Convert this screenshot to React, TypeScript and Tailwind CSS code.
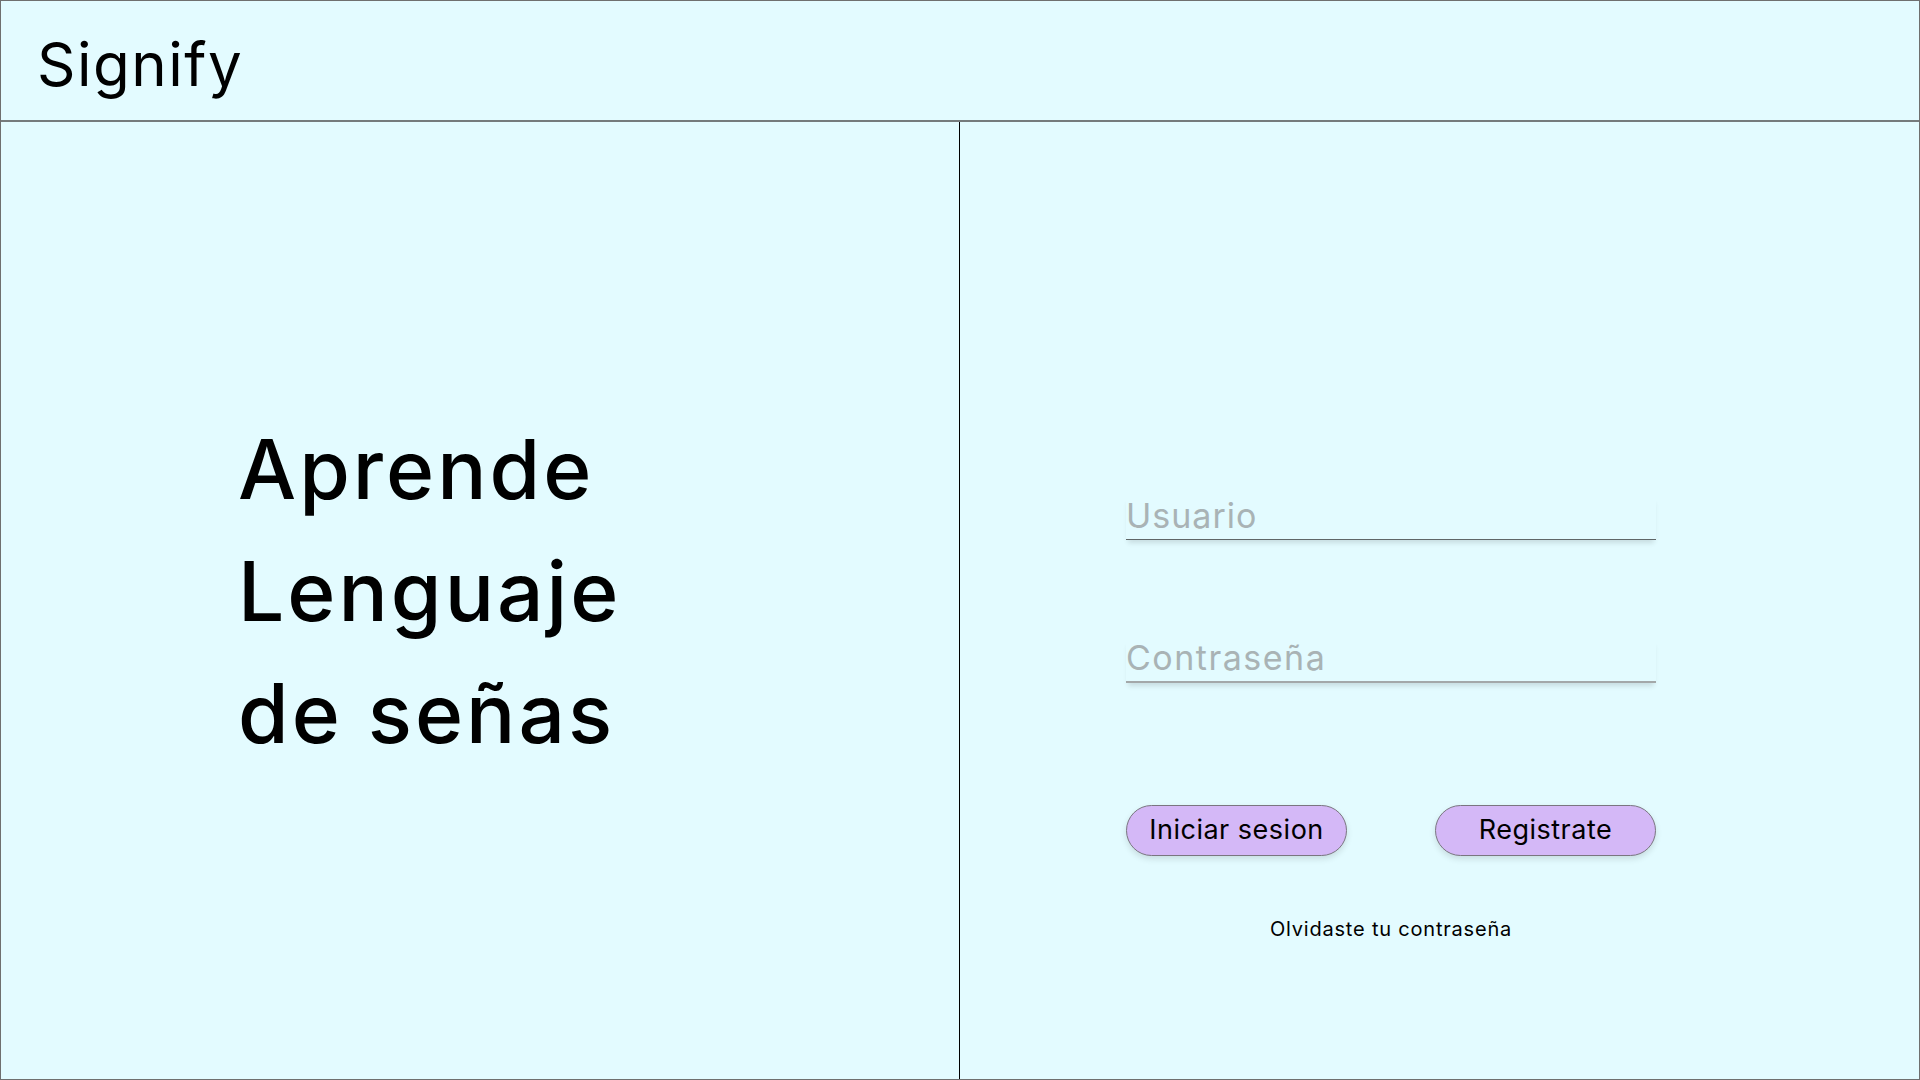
import React from 'react';

const font = { fontFamily: 'Inter, "Noto Sans", sans-serif' };

export default function App() {
  return (
    <div
      className="w-full h-screen flex flex-col bg-[#e3fbff] border border-[#6f6f6f] text-black overflow-hidden"
      style={font}
    >
      {/* Header */}
      <header className="h-[121px] shrink-0 border-b-2 border-[#757b7c] pl-[36px] pt-[33px]">
        <h1 className="text-[60px] leading-none font-normal tracking-[1.5px]">Signify</h1>
      </header>

      <main className="flex-1 grid grid-cols-2">
        {/* Left panel */}
        <section className="border-r border-black pl-[237px] pt-[287px]">
          <h2 className="text-[82px] leading-[122px] font-medium tracking-[3px]">
            Aprende
            <br />
            Lenguaje
            <br />
            de señas
          </h2>
        </section>

        {/* Right panel - login form */}
        <section className="pl-[166px] pt-[374px]">
          <div className="w-[530px] flex flex-col">
            <input
              type="text"
              placeholder="Usuario"
              className="h-[44px] pb-[4px] w-full bg-transparent border-b border-[#5f6667] shadow-[0_5px_5px_-2px_rgba(0,0,0,0.12)] text-[34px] leading-none tracking-[1px] outline-none placeholder:text-[#a9b3b5]"
            />
            <input
              type="password"
              placeholder="Contraseña"
              className="mt-[99px] h-[44px] pb-[5px] w-full bg-transparent border-b-2 border-[#a3a8a9] shadow-[0_5px_5px_-2px_rgba(0,0,0,0.12)] text-[34px] leading-none tracking-[1.5px] outline-none placeholder:text-[#a9b3b5]"
            />

            <div className="mt-[122px] flex justify-between">
              <button className="w-[221px] h-[51px] rounded-full bg-[#d4b8f7] border border-[#7a7580] shadow-[0_3px_6px_rgba(0,0,0,0.12)] text-[27px] tracking-[0.5px] font-normal">
                Iniciar sesion
              </button>
              <button className="w-[221px] h-[51px] rounded-full bg-[#d4b8f7] border border-[#7a7580] shadow-[0_3px_6px_rgba(0,0,0,0.12)] text-[27px] tracking-[0.5px] font-normal">
                Registrate
              </button>
            </div>

            <a className="mt-[59px] text-center text-[20px] leading-[28px] tracking-[0.8px] cursor-pointer">
              Olvidaste tu contraseña
            </a>
          </div>
        </section>
      </main>
    </div>
  );
}
